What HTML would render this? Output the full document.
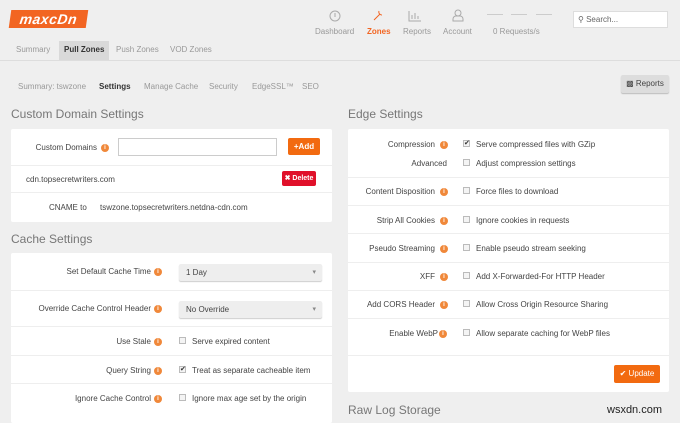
<!DOCTYPE html>
<html><head><meta charset="utf-8"><style>
*{margin:0;padding:0;box-sizing:border-box}
body{width:680px;height:420px;overflow:hidden;background:#efefef;font-family:"Liberation Sans",sans-serif;font-size:8px;color:#444;position:relative}
.a{position:absolute;white-space:nowrap}
.logo{left:10px;top:10px;width:77px;height:18px;background:#f26522;transform:skewX(-8deg);color:#fff;font-weight:bold;font-style:italic;font-size:14px;line-height:18px;text-align:center;letter-spacing:.5px}
.nav{color:#999;font-size:8px;text-align:center}
.tab{top:45px;color:#999;font-size:8px}
.sub{top:82px;color:#999;font-size:8px}
.h{font-size:12px;color:#777;font-weight:300}
.panel{background:#fff;position:absolute;border-radius:2px}
.hr{position:absolute;height:1px;background:#eee}
.i{display:inline-block;width:8px;height:8px;border-radius:50%;background:#f0883a;color:#fff;font-size:6px;line-height:8px;text-align:center;font-weight:bold;vertical-align:middle}
.lab{text-align:right;color:#444}
.cb{width:7px;height:7px;border:1px solid #bbb;background:#f4f4f4;position:absolute}
.ck{font-size:7px;line-height:6px;color:#333;text-align:center}
.sel{background:#eee;border-radius:2px;box-shadow:0 1px 1px #ccc;position:absolute;padding-left:7px;line-height:17px;font-size:8px;color:#444}
.sel:after{content:"▾";position:absolute;right:6px;color:#888;font-size:7px}
.btn{position:absolute;color:#fff;font-size:8px;text-align:center;border-radius:2px}
</style></head><body>
<div class="a logo">maxcDn</div>

<svg class="a" style="left:329px;top:10px" width="12" height="12"><circle cx="6" cy="6" r="5" fill="none" stroke="#aaa"/><path d="M6 3v4" stroke="#aaa"/></svg>
<svg class="a" style="left:372px;top:9px" width="12" height="13"><path d="M2 11l6-6M7 2a3 3 0 0 0 3 4" stroke="#f26522" fill="none"/></svg>
<svg class="a" style="left:408px;top:10px" width="14" height="12"><path d="M1 1v10h12M4 9V5M7 9V3M10 9V6" stroke="#aaa" fill="none"/></svg>
<svg class="a" style="left:452px;top:9px" width="12" height="13"><circle cx="6" cy="4" r="3" fill="none" stroke="#aaa"/><path d="M1 12v-2a3 3 0 0 1 3-3h4a3 3 0 0 1 3 3v2z" fill="none" stroke="#aaa"/></svg>
<div class="a nav" style="left:315px;top:27px">Dashboard</div>
<div class="a nav" style="left:367px;top:27px;color:#f26522;font-weight:bold">Zones</div>
<div class="a nav" style="left:403px;top:27px">Reports</div>
<div class="a nav" style="left:443px;top:27px">Account</div>
<div class="a" style="left:487px;top:14px;width:16px;height:1px;background:#ccc"></div>
<div class="a" style="left:511px;top:14px;width:16px;height:1px;background:#ccc"></div>
<div class="a" style="left:536px;top:14px;width:16px;height:1px;background:#ccc"></div>
<div class="a nav" style="left:493px;top:27px">0 Requests/s</div>
<div class="a" style="left:573px;top:11px;width:95px;height:17px;background:#fff;border:1px solid #ddd;color:#666;line-height:15px;padding-left:4px;font-size:8px">&#9906; Search...</div>

<div class="a" style="left:59px;top:41px;width:50px;height:20px;background:#d9d9d9"></div>
<div class="a tab" style="left:16px">Summary</div>
<div class="a tab" style="left:64px;color:#333;font-weight:bold">Pull Zones</div>
<div class="a tab" style="left:116px">Push Zones</div>
<div class="a tab" style="left:170px">VOD Zones</div>
<div class="a" style="left:0;top:60px;width:680px;height:1px;background:#ddd"></div>

<div class="a sub" style="left:18px">Summary: tswzone</div>
<div class="a sub" style="left:99px;color:#333;font-weight:bold">Settings</div>
<div class="a sub" style="left:144px">Manage Cache</div>
<div class="a sub" style="left:209px">Security</div>
<div class="a sub" style="left:252px">EdgeSSL™</div>
<div class="a sub" style="left:302px">SEO</div>
<div class="a" style="left:621px;top:75px;width:48px;height:18px;background:#ddd;border-radius:2px;box-shadow:0 1px 1px #bbb;color:#444;font-size:8px;line-height:18px;text-align:center">&#9641; Reports</div>

<div class="a h" style="left:11px;top:107px">Custom Domain Settings</div>
<div class="panel" style="left:11px;top:129px;width:321px;height:93px"></div>
<div class="a lab" style="left:20px;top:143px;width:77px">Custom Domains</div>
<div class="a" style="left:101px;top:143px"><span class="i">i</span></div>
<div class="a" style="left:118px;top:138px;width:159px;height:18px;border:1px solid #ccc;background:#fff"></div>
<div class="btn" style="left:288px;top:138px;width:32px;height:17px;line-height:17px;background:#f26a10;font-weight:bold">+Add</div>
<div class="hr" style="left:11px;top:165px;width:321px"></div>
<div class="a" style="left:26px;top:175px">cdn.topsecretwriters.com</div>
<div class="btn" style="left:282px;top:171px;width:34px;height:15px;line-height:15px;background:#e0102a;font-size:7px;font-weight:bold">✖ Delete</div>
<div class="hr" style="left:11px;top:192px;width:321px"></div>
<div class="a" style="left:49px;top:203px">CNAME to</div>
<div class="a" style="left:100px;top:203px">tswzone.topsecretwriters.netdna-cdn.com</div>

<div class="a h" style="left:11px;top:232px">Cache Settings</div>
<div class="panel" style="left:11px;top:253px;width:321px;height:170px"></div>
<div class="a lab" style="left:20px;top:267px;width:131px">Set Default Cache Time</div>
<div class="a" style="left:154px;top:267px"><span class="i">i</span></div>
<div class="sel" style="left:179px;top:264px;width:143px;height:17px">1 Day</div>
<div class="hr" style="left:11px;top:290px;width:321px"></div>
<div class="a lab" style="left:20px;top:304px;width:131px">Override Cache Control Header</div>
<div class="a" style="left:154px;top:304px"><span class="i">i</span></div>
<div class="sel" style="left:179px;top:301px;width:143px;height:17px">No Override</div>
<div class="hr" style="left:11px;top:326px;width:321px"></div>
<div class="a lab" style="left:20px;top:337px;width:131px">Use Stale</div>
<div class="a" style="left:154px;top:337px"><span class="i">i</span></div>
<div class="cb" style="left:179px;top:337px"></div>
<div class="a" style="left:192px;top:337px">Serve expired content</div>
<div class="hr" style="left:11px;top:355px;width:321px"></div>
<div class="a lab" style="left:20px;top:366px;width:131px">Query String</div>
<div class="a" style="left:154px;top:366px"><span class="i">i</span></div>
<div class="cb ck" style="left:179px;top:366px">✔</div>
<div class="a" style="left:192px;top:366px">Treat as separate cacheable item</div>
<div class="hr" style="left:11px;top:383px;width:321px"></div>
<div class="a lab" style="left:20px;top:394px;width:131px">Ignore Cache Control</div>
<div class="a" style="left:154px;top:394px"><span class="i">i</span></div>
<div class="cb" style="left:179px;top:394px"></div>
<div class="a" style="left:192px;top:394px">Ignore max age set by the origin</div>

<div class="a h" style="left:348px;top:107px">Edge Settings</div>
<div class="panel" style="left:348px;top:129px;width:321px;height:263px"></div>
<div class="a lab" style="left:350px;top:140px;width:85px">Compression</div><div class="a" style="left:440px;top:140px"><span class="i">i</span></div>
<div class="cb ck" style="left:463px;top:140px">✔</div><div class="a" style="left:476px;top:140px">Serve compressed files with GZip</div>
<div class="a lab" style="left:350px;top:159px;width:97px">Advanced</div>
<div class="cb" style="left:463px;top:159px"></div><div class="a" style="left:476px;top:159px">Adjust compression settings</div>
<div class="hr" style="left:348px;top:177px;width:321px"></div>
<div class="a lab" style="left:350px;top:187px;width:85px">Content Disposition</div><div class="a" style="left:440px;top:187px"><span class="i">i</span></div>
<div class="cb" style="left:463px;top:187px"></div><div class="a" style="left:476px;top:187px">Force files to download</div>
<div class="hr" style="left:348px;top:205px;width:321px"></div>
<div class="a lab" style="left:350px;top:216px;width:85px">Strip All Cookies</div><div class="a" style="left:440px;top:216px"><span class="i">i</span></div>
<div class="cb" style="left:463px;top:216px"></div><div class="a" style="left:476px;top:216px">Ignore cookies in requests</div>
<div class="hr" style="left:348px;top:233px;width:321px"></div>
<div class="a lab" style="left:350px;top:244px;width:85px">Pseudo Streaming</div><div class="a" style="left:440px;top:244px"><span class="i">i</span></div>
<div class="cb" style="left:463px;top:244px"></div><div class="a" style="left:476px;top:244px">Enable pseudo stream seeking</div>
<div class="hr" style="left:348px;top:262px;width:321px"></div>
<div class="a lab" style="left:350px;top:272px;width:85px">XFF</div><div class="a" style="left:440px;top:272px"><span class="i">i</span></div>
<div class="cb" style="left:463px;top:272px"></div><div class="a" style="left:476px;top:272px">Add X-Forwarded-For HTTP Header</div>
<div class="hr" style="left:348px;top:290px;width:321px"></div>
<div class="a lab" style="left:350px;top:300px;width:85px">Add CORS Header</div><div class="a" style="left:440px;top:300px"><span class="i">i</span></div>
<div class="cb" style="left:463px;top:300px"></div><div class="a" style="left:476px;top:300px">Allow Cross Origin Resource Sharing</div>
<div class="hr" style="left:348px;top:318px;width:321px"></div>
<div class="a lab" style="left:350px;top:329px;width:88px">Enable WebP</div><div class="a" style="left:439px;top:329px"><span class="i">i</span></div>
<div class="cb" style="left:463px;top:329px"></div><div class="a" style="left:476px;top:329px">Allow separate caching for WebP files</div>
<div class="hr" style="left:348px;top:355px;width:321px"></div>
<div class="btn" style="left:614px;top:365px;width:46px;height:18px;line-height:18px;background:#f26a10">✔ Update</div>

<div class="a h" style="left:348px;top:403px">Raw Log Storage</div>
<div class="a" style="left:607px;top:404px;font-size:11px;color:#222">wsxdn.com</div>
</body></html>
